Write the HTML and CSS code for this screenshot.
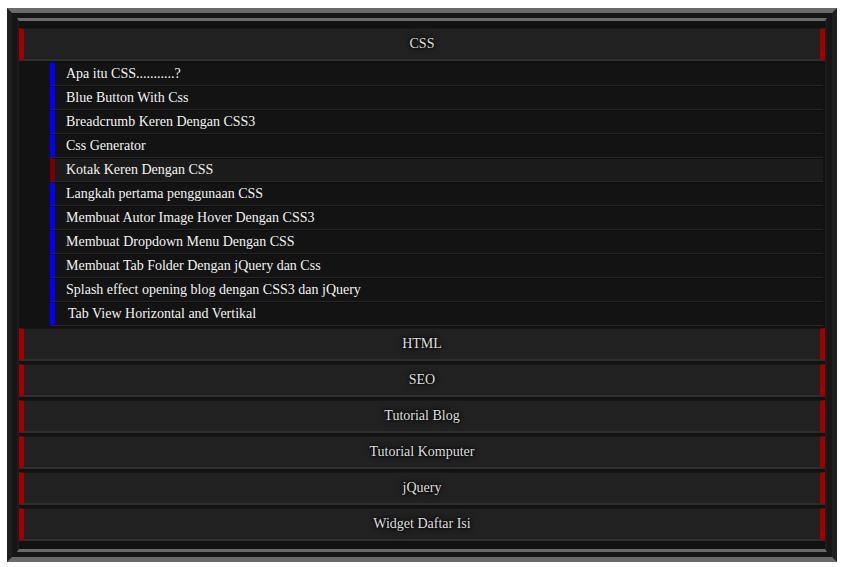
FILE: index.html
```html
<!DOCTYPE html>
<html lang="id">
<head>
    <meta charset="UTF-8">
    <meta name="viewport" content="width=device-width, initial-scale=1.0">
    <title>Daftar Isi</title>
    <link rel="stylesheet" href="styles.css">
</head>
<body>
    <div class="toc">
        <div class="toc-inner">
            <!-- CSS category, opened -->
            <div class="cat">
                <h3 class="cat-title">CSS</h3>
                <ul class="posts">
                    <li>Apa itu CSS...........?</li>
                    <li>Blue Button With Css</li>
                    <li>Breadcrumb Keren Dengan CSS3</li>
                    <li>Css Generator</li>
                    <li class="active">Kotak Keren Dengan CSS</li>
                    <li>Langkah pertama penggunaan CSS</li>
                    <li>Membuat Autor Image Hover Dengan CSS3</li>
                    <li>Membuat Dropdown Menu Dengan CSS</li>
                    <li>Membuat Tab Folder Dengan jQuery dan Css</li>
                    <li>Splash effect opening blog dengan CSS3 dan jQuery</li>
                    <li class="shift">Tab View Horizontal and Vertikal</li>
                </ul>
            </div>

            <div class="cat"><h3 class="cat-title">HTML</h3></div>
            <div class="cat"><h3 class="cat-title">SEO</h3></div>
            <div class="cat"><h3 class="cat-title">Tutorial Blog</h3></div>
            <div class="cat"><h3 class="cat-title">Tutorial Komputer</h3></div>
            <div class="cat"><h3 class="cat-title">jQuery</h3></div>
            <div class="cat"><h3 class="cat-title">Widget Daftar Isi</h3></div>
        </div>
    </div>
</body>
</html>
```

FILE: styles.css
```css
body {
    margin: 8px 0 0 7px;
    background-color: #fff;
    font-family: "Liberation Serif", "Times New Roman", serif;
}

.toc {
    width: 810px;
    border: 5px solid;
    border-color: #6a6a6a #1f1f1f;
    padding: 5px;
    background-color: #161616;
}

.toc-inner {
    border-style: solid;
    border-width: 3px 2px;
    border-color: #6a6a6a #1c1c1c;
    background-color: #121212;
    padding: 7px 0 5px;
}

.cat-title {
    margin: 0 0 3px;
    height: 30px;
    line-height: 30px;
    border-top: 1px solid #181818;
    border-bottom: 2px solid #2e2e2e;
    border-left: 5px solid #a00000;
    border-right: 5px solid #a00000;
    background-color: #212121;
    text-align: center;
    font-size: 14px;
    font-weight: normal;
    color: #dedede;
    text-shadow: 0 0 3px #000, 0 0 6px #000;
}

.posts {
    list-style: none;
    margin: -2px 2px 2px 31px;
    padding: 0;
}

.posts li {
    height: 22px;
    line-height: 22px;
    border-top: 1px solid #0c0c0c;
    border-bottom: 1px solid #272727;
    border-left: 5px solid #0000f0;
    padding-left: 11px;
    background-color: #131313;
    color: #f2f2f2;
    font-size: 14px;
}

.posts li.active {
    border-left-color: #760000;
    background-color: #1b1b1b;
}

.posts li.shift {
    padding-left: 13px;
}
```
